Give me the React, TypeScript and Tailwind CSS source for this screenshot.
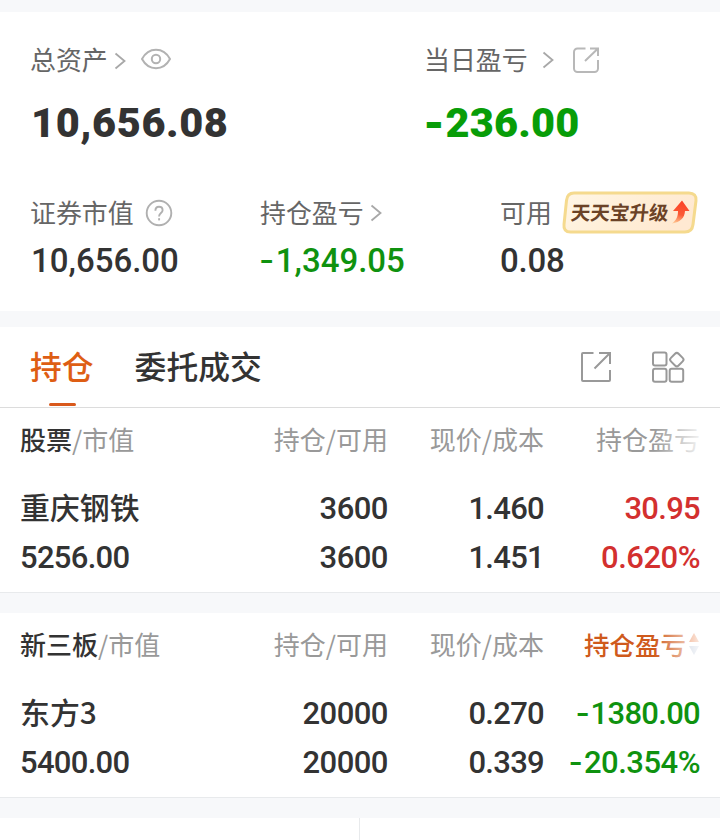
import React from 'react';

interface CellValue {
  text: string;
  className?: string;
}

interface Holding {
  name: string;
  marketValue: string;
  amount: string;
  available: string;
  price: string;
  cost: string;
  profit: string;
  percent: string;
  color: string;
}

const HOLDINGS: Record<'stock' | 'neeq', Holding> = {
  stock: {
    name: '重庆钢铁',
    marketValue: '5256.00',
    amount: '3600',
    available: '3600',
    price: '1.460',
    cost: '1.451',
    profit: '30.95',
    percent: '0.620%',
    color: 'text-[#d3302f]',
  },
  neeq: {
    name: '东方3',
    marketValue: '5400.00',
    amount: '20000',
    available: '20000',
    price: '0.270',
    cost: '0.339',
    profit: '-1380.00',
    percent: '-20.354%',
    color: 'text-[#0f920f]',
  },
};

// The minus sign uses a wider face than the digits
const Num: React.FC<CellValue> = ({ text, className = '' }) => {
  const negative = text.startsWith('-');
  return (
    <span className={`font-[Roboto,'Noto_Sans_CJK_SC',sans-serif] whitespace-nowrap ${className}`}>
      {negative && <span className="font-[Inter,sans-serif] leading-none mr-[1.5px]">-</span>}
      {negative ? text.slice(1) : text}
    </span>
  );
};

const Chevron = ({ className = '' }: { className?: string }) => (
  <svg className={className} width="12" height="18" viewBox="0 0 12 18" fill="none" stroke="#a8a8a8" strokeWidth="1.8">
    <path d="M1.500 1.500 10.500 9l-9 7.500" />
  </svg>
);

const EyeIcon = () => (
  <svg width="32" height="22" viewBox="0 0 32 22" fill="none" stroke="#b2b2b2" strokeWidth="2">
    <path d="M2 11C5.500 4.500 10 1.800 16 1.800S26.500 4.500 30 11C26.500 17.500 22 20.200 16 20.200S5.500 17.500 2 11Z" strokeLinejoin="round" />
    <circle cx="16" cy="11" r="4.200" />
  </svg>
);

const ShareIcon = () => (
  <svg width="28" height="28" viewBox="0 0 28 28" fill="none" stroke="#b8b8b8" strokeWidth="2">
    <path d="M13.500 2.500H5.500A3.500 3.500 0 0 0 2 6v16.500A3.500 3.500 0 0 0 5.500 26h17a3.500 3.500 0 0 0 3.500-3.500V14" />
    <path d="M18 2.500h8V10M26 2.500 13 15" />
  </svg>
);

const ExportIcon = () => (
  <svg width="32" height="32" viewBox="0 0 32 32" fill="none" stroke="#999" strokeWidth="2">
    <path d="M13.500 2H3a1 1 0 0 0-1 1v26a1 1 0 0 0 1 1h26a1 1 0 0 0 1-1V19" />
    <path d="M19 2h11v11M30 2 14.500 17.500" />
  </svg>
);

const GridIcon = () => (
  <svg width="34" height="34" viewBox="0 0 34 34" fill="none" stroke="#999" strokeWidth="2">
    <rect x="2" y="2.500" width="13.500" height="13" rx="2" />
    <rect x="2" y="18.800" width="13.500" height="13" rx="2" />
    <rect x="18.700" y="18.800" width="13.500" height="13" rx="2" />
    <rect x="20.400" y="4.200" width="10.800" height="10.800" rx="2.500" transform="rotate(45 25.800 9.600)" />
  </svg>
);

const HelpIcon = () => (
  <svg width="28" height="28" viewBox="0 0 28 28" fill="none" stroke="#b0b0b0" strokeWidth="1.900">
    <circle cx="14" cy="14" r="12.300" />
    <path d="M10.400 11.700c0-2.400 1.500-3.900 3.600-3.900s3.600 1.400 3.600 3.400c0 2.600-3.500 3-3.500 6v.4" />
    <path d="M14.100 19.200v2.200" />
  </svg>
);

const UpgradeBadge = () => (
  <div className="relative w-[136px] h-[44px]">
    <svg className="absolute inset-0" width="136" height="44" viewBox="0 0 136 44">
      <defs>
        <linearGradient id="badgeFill" x1="0" y1="0" x2="1" y2="0.3">
          <stop offset="0" stopColor="#fff6e6" />
          <stop offset="0.6" stopColor="#ffeed6" />
          <stop offset="1" stopColor="#ffe9d2" />
        </linearGradient>
        <linearGradient id="arrowFill" x1="0.5" y1="0" x2="0.3" y2="1">
          <stop offset="0" stopColor="#fb4126" />
          <stop offset="0.6" stopColor="#fb5a35" />
          <stop offset="1" stopColor="#ffc48f" />
        </linearGradient>
      </defs>
      <path d="M12 2H127c5 0 7.500 3 7 7.500l-3 24c-.6 5-3.500 7.500-8 7.500H8.500c-5 0-7-3-6.500-7.500l2.500-24C5 4.500 8 2 12 2Z" fill="url(#badgeFill)" stroke="#f5da8e" strokeWidth="3" />
      <path d="M120 9.500 127.500 20H123c-.5 7-4.500 11-13 12.500 4.500-3.500 6-7 6-12.500h-5Z" fill="url(#arrowFill)" />
    </svg>
    <span className="relative block pl-[9px] text-[19.500px] leading-[42px] font-bold -skew-x-6 text-[#6b4226] whitespace-nowrap">天天宝升级</span>
  </div>
);

const SortArrows = () => (
  <svg className="ml-[2px]" width="12" height="24" viewBox="0 0 12 24">
    <path d="M6 1 11 10H1Z" fill="#e2560f" />
    <path d="M6 23 11 14H1Z" fill="#aebbd0" />
  </svg>
);

const HeaderRow = ({ title, active = false }: { title: string; active?: boolean }) => (
  <div className="grid grid-cols-[200px_168px_156px_156px] h-[66px] text-[26px] leading-[62px] text-[#999]">
    <div className="whitespace-nowrap">
      <span className="font-medium text-[#333]">{title}</span>/市值
    </div>
    <div className="text-right">持仓/可用</div>
    <div className="text-right">现价/成本</div>
    <div className="relative flex h-[62px] justify-end items-center overflow-hidden whitespace-nowrap">
      <span className={active ? 'font-medium text-[25.500px] text-[#cf5a1c]' : ''}>持仓盈亏</span>
      {active && <SortArrows />}
      <div className="absolute right-0 top-0 w-[46px] h-full bg-linear-to-r from-white/0 to-white to-115%"></div>
    </div>
  </div>
);

const HoldingRow = ({ item }: { item: Holding }) => (
  <div className="h-[118px] grid grid-cols-[200px_168px_156px_156px] grid-rows-[49px_49px] pt-[10px] text-[31px] leading-[49px] font-medium text-[#333]">
    <span className="relative -top-[2px] text-[29.900px]">{item.name}</span>
    <Num text={item.amount} className="text-right tracking-[-0.5px]" />
    <Num text={item.price} className="text-right tracking-[-0.7px]" />
    <Num text={item.profit} className={`text-right tracking-[-0.7px] ${item.color}`} />
    <Num text={item.marketValue} className="tracking-[-0.7px]" />
    <Num text={item.available} className="text-right tracking-[-0.5px]" />
    <Num text={item.cost} className="text-right tracking-[-0.7px]" />
    <Num text={item.percent} className={`text-right tracking-[-0.5px] ${item.color}`} />
  </div>
);

const App: React.FC = () => {
  return (
    <div className="w-[720px] h-[840px] overflow-hidden bg-[#f7f8fa] pt-3 font-['Noto_Sans_CJK_SC',sans-serif] text-[#333]">
      {/* Assets summary */}
      <section className="h-[299px] bg-white pl-[30px] pt-[27px] whitespace-nowrap">
        <div className="flex h-[40px] text-[25.900px] leading-[40px] text-[#666]">
          <div className="flex w-[394px] items-center">
            <span>总资产</span>
            <Chevron className="ml-[6px] mt-[4px]" />
            <div className="ml-[14px]"><EyeIcon /></div>
          </div>
          <div className="flex items-center">
            <span>当日盈亏</span>
            <Chevron className="ml-[14px] mt-[2px]" />
            <div className="ml-[18px] mt-[2px]"><ShareIcon /></div>
          </div>
        </div>
        <div className="flex h-[64px] mt-[12px] text-[41.500px] leading-[64px] font-black tracking-[0.6px]">
          <Num text="10,656.08" className="w-[394px] pl-px" />
          <Num text="-236.00" className="text-[#089d08] tracking-[0.2px]" />
        </div>

        <div className="flex h-[44px] mt-[36px] text-[25.900px] leading-[42px] text-[#666]">
          <div className="flex w-[230px] items-center -mt-[3px]">
            <span>证券市值</span>
            <div className="ml-[11px] mt-[3px]"><HelpIcon /></div>
          </div>
          <div className="flex w-[240px] items-center -mt-[3px]">
            <span>持仓盈亏</span>
            <Chevron className="ml-[6px] mt-[3px]" />
          </div>
          <div className="flex items-center -mt-[3px]">
            <span>可用</span>
            <div className="ml-[10px] mt-[3px]"><UpgradeBadge /></div>
          </div>
        </div>
        <div className="flex h-[50px] mt-px text-[33px] leading-[50px] font-medium">
          <Num text="10,656.00" className="w-[229px] pl-px" />
          <Num text="-1,349.05" className="w-[241px] text-[#0f920f]" />
          <Num text="0.08" className="tracking-[-0.2px]" />
        </div>
      </section>

      {/* Tabs and stock holdings */}
      <section className="mt-4 bg-white">
        <div className="flex h-[81px] items-stretch border-b border-[#dcdcdc] pl-[30px] pr-[35px] text-[31.800px] leading-[77px] font-medium">
          <div className="relative text-[#de5e14]">
            持仓
            <div className="absolute left-[19px] bottom-px w-[27px] h-[3px] rounded-full bg-[#d9591c]"></div>
          </div>
          <div className="ml-[41px]">委托成交</div>
          <div className="ml-auto flex items-center gap-[39px]">
            <ExportIcon />
            <GridIcon />
          </div>
        </div>
        <div className="border-b border-[#e8eaec] px-5">
          <HeaderRow title="股票" />
          <HoldingRow item={HOLDINGS.stock} />
        </div>
      </section>

      {/* NEEQ holdings */}
      <section className="mt-5 border-b border-[#e8eaec] bg-white px-5">
        <HeaderRow title="新三板" active />
        <HoldingRow item={HOLDINGS.neeq} />
      </section>

      <div className="mt-5 flex h-[22px] bg-white">
        <div className="w-[360px] border-r border-[#e8eaec]"></div>
      </div>
    </div>
  );
};

export default App;
